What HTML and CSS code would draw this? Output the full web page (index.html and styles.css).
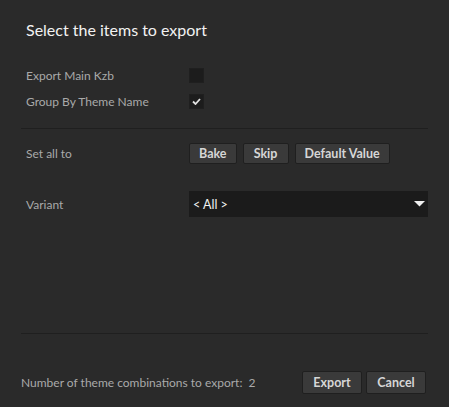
FILE: index.html
```html
<!DOCTYPE html>
<html>
<head>
<meta charset="utf-8">
<link rel="stylesheet" href="styles.css">
</head>
<body>
<div class="dialog">
  <h1 class="title">Select the items to export</h1>
  <div class="options">
    <div class="row">
      <span class="label">Export Main Kzb</span>
      <span class="check"></span>
    </div>
    <div class="row">
      <span class="label">Group By Theme Name</span>
      <span class="check">
        <svg width="9" height="7" viewBox="0 0 9 7"><path d="M1 3.5 L3.5 6 L8 1" fill="none" stroke="#e0e0e0" stroke-width="1.8"/></svg>
      </span>
    </div>
  </div>
  <div class="sep"></div>
  <div class="settings">
    <div class="row setall">
      <span class="label">Set all to</span>
      <div class="btns">
        <button class="btn">Bake</button>
        <button class="btn">Skip</button>
        <button class="btn">Default Value</button>
      </div>
    </div>
    <div class="row variant">
      <span class="label">Variant</span>
      <div class="select">
        <span>&lt; All &gt;</span>
        <svg width="11" height="6" viewBox="0 0 11 6"><path d="M0 0 H11 L5.5 5.5 Z" fill="#f0f0f0"/></svg>
      </div>
    </div>
  </div>
  <div class="sep sep2"></div>
  <div class="footer">
    <span class="count">Number of theme combinations to export:&nbsp; 2</span>
    <div class="actions">
      <button class="btn big">Export</button>
      <button class="btn big">Cancel</button>
    </div>
  </div>
</div>
</body>
</html>
```
FILE: styles.css
```css
html, body {
  margin: 0;
  padding: 0;
  background: #2a2a2a;
}
body {
  width: 449px;
  height: 407px;
  overflow: hidden;
  font-family: Lato, "Open Sans", sans-serif;
}
.dialog {
  display: flex;
  flex-direction: column;
  padding: 0 21px;
}
.title {
  margin: 19px 0 0 5px;
  font-size: 16px;
  font-weight: normal;
  line-height: 22px;
  color: #f2f2f2;
}
.options {
  margin-top: 21px;
  display: flex;
  flex-direction: column;
}
.row {
  display: flex;
  align-items: center;
  height: 26px;
}
.label {
  padding-left: 5px;
  box-sizing: border-box;
  font-size: 12px;
  color: #a9a9a9;
}
.row .label {
  width: 168px;
}
.check {
  width: 15px;
  height: 15px;
  box-sizing: border-box;
  background: #1c1c1c;
  border: 1px solid #1f1f1f;
  display: flex;
  align-items: center;
  justify-content: center;
}
.sep {
  margin-top: 14px;
  height: 1px;
  background: #1f1f1f;
}
.settings {
  display: flex;
  flex-direction: column;
}
.setall {
  margin-top: 13px;
  height: 23px;
}
.btns {
  display: flex;
  gap: 6px;
}
.btn {
  min-width: 46px;
  height: 21px;
  padding: 0 9px;
  background: #3a3a3a;
  border: 1px solid #1f1f1f;
  border-radius: 2px;
  color: #d6d6d6;
  font-family: Lato, "Open Sans", sans-serif;
  font-weight: bold;
  font-size: 12.5px;
  line-height: 18px;
}
.variant {
  margin-top: 26px;
  height: 26px;
}
.select {
  flex: 1;
  height: 26px;
  background: #1b1b1b;
  display: flex;
  align-items: center;
  justify-content: space-between;
  padding: 0 3px 0 4px;
  box-sizing: border-box;
  color: #f2f2f2;
  font-size: 12.5px;
}
.sep2 {
  margin-top: 116px;
}
.footer {
  margin-top: 37px;
  display: flex;
  align-items: center;
  justify-content: space-between;
  height: 23px;
}
.count {
  font-size: 12px;
  color: #a9a9a9;
}
.actions {
  display: flex;
  gap: 4px;
  margin-right: 2px;
}
.btn.big {
  width: 60px;
  height: 23px;
  padding: 0;
}
```
